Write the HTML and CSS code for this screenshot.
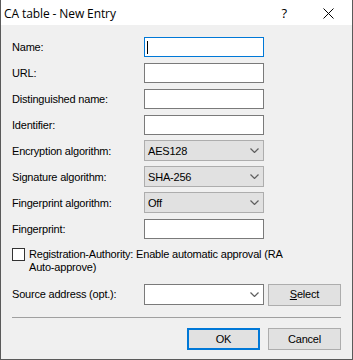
FILE: index.html
```html
<!DOCTYPE html>
<html>
<head>
<meta charset="utf-8">
<link rel="stylesheet" href="styles.css">
</head>
<body>
<div class="window">
  <div class="titlebar">
    <span class="title">CA table - New Entry</span>
    <span class="help">?</span>
    <svg class="close" width="11" height="11" viewBox="0 0 11 11"><path d="M0.5 0.5 L10.5 10.5 M10.5 0.5 L0.5 10.5" stroke="#000" stroke-width="1" fill="none"/></svg>
  </div>
  <div class="content">
    <div class="form">
      <label class="lbl">Name:</label>
      <div class="textbox focused"><span class="caret"></span></div>
      <label class="lbl">URL:</label>
      <div class="textbox"></div>
      <label class="lbl">Distinguished name:</label>
      <div class="textbox"></div>
      <label class="lbl">Identifier:</label>
      <div class="textbox"></div>
      <label class="lbl">Encryption algorithm:</label>
      <div class="combo"><span class="val">AES128</span><svg class="chev" width="9" height="5" viewBox="0 0 9 5"><polyline points="0.5,0.5 4.5,4.5 8.5,0.5" stroke="#5f5f5f" stroke-width="1.2" fill="none"/></svg></div>
      <label class="lbl">Signature algorithm:</label>
      <div class="combo"><span class="val">SHA-256</span><svg class="chev" width="9" height="5" viewBox="0 0 9 5"><polyline points="0.5,0.5 4.5,4.5 8.5,0.5" stroke="#5f5f5f" stroke-width="1.2" fill="none"/></svg></div>
      <label class="lbl">Fingerprint algorithm:</label>
      <div class="combo"><span class="val">Off</span><svg class="chev" width="9" height="5" viewBox="0 0 9 5"><polyline points="0.5,0.5 4.5,4.5 8.5,0.5" stroke="#5f5f5f" stroke-width="1.2" fill="none"/></svg></div>
      <label class="lbl">Fingerprint:</label>
      <div class="textbox"></div>
    </div>
    <div class="check-row">
      <span class="checkbox"></span>
      <span class="check-text">Registration-Authority: Enable automatic approval (RA<br>Auto-approve)</span>
    </div>
    <div class="source-row">
      <label class="lbl">Source address (opt.):</label>
      <div class="combo white"><span class="val"></span><svg class="chev" width="9" height="5" viewBox="0 0 9 5"><polyline points="0.5,0.5 4.5,4.5 8.5,0.5" stroke="#5f5f5f" stroke-width="1.2" fill="none"/></svg></div>
      <div class="btn select-btn"><span><u>S</u>elect</span></div>
    </div>
    <div class="sep"></div>
    <div class="buttons">
      <div class="btn default">OK</div>
      <div class="btn">Cancel</div>
    </div>
  </div>
</div>
</body>
</html>
```

FILE: styles.css
```css
* { box-sizing: border-box; }
html, body { margin: 0; padding: 0; background: #f0f0f0; }
body { font-family: "Liberation Sans", Arial, sans-serif; font-size: 11px; letter-spacing: -0.2px; color: #000; }

.window {
  width: 353px;
  height: 360px;
  background: #f0f0f0;
  border-left: 1px solid #5a5a5a;
  border-right: 1px solid #5a5a5a;
  border-bottom: 1px solid #5a5a5a;
  display: flex;
  flex-direction: column;
}

.titlebar {
  height: 25px;
  background: #fff;
  display: flex;
  align-items: center;
  padding-left: 3px;
}
.title {
  font-family: "Open Sans", "Noto Sans", sans-serif;
  font-size: 12px;
  color: #000;
  flex: 1;
  margin-top: 1px;
  letter-spacing: -0.1px;
}
.help {
  font-family: "Open Sans", "Noto Sans", sans-serif;
  font-size: 13px;
  letter-spacing: 0;
  margin-right: 36px;
  margin-top: 1px;
}
.close { margin-right: 18px; margin-top: 1px; display: block; }

.content {
  padding: 12px 11px 0 11px;
  display: flex;
  flex-direction: column;
}

.form {
  display: grid;
  grid-template-columns: 132px 120px;
  grid-auto-rows: 20px;
  row-gap: 6px;
  align-items: start;
}
.lbl { align-self: center; line-height: 13px; white-space: nowrap; }

.textbox {
  height: 20px;
  background: #fff;
  border: 1px solid #7a7a7a;
  display: flex;
  align-items: center;
  padding-left: 2px;
}
.textbox.focused { border-color: #0078d7; }
.caret { width: 1px; height: 13px; background: #000; }

.combo {
  height: 21px;
  margin-top: -1px;
  background: #e1e1e1;
  border: 1px solid #adadad;
  display: flex;
  align-items: center;
  padding: 0 4px 0 3px;
}
.combo .val { flex: 1; }
.combo .chev { display: block; }
.combo.white { background: #fff; border-color: #7a7a7a; margin-top: 0; width: 120px; }

.check-row {
  margin-top: 9px;
  display: flex;
  align-items: flex-start;
  gap: 4px;
  line-height: 13px;
}
.checkbox {
  width: 13px;
  height: 13px;
  border: 1px solid #333;
  background: #fff;
  flex: none;
}

.source-row {
  margin-top: 10px;
  display: flex;
  align-items: center;
  height: 21px;
}
.source-row .lbl { width: 132px; }
.select-btn { margin-left: 4px; width: 73px; height: 20px; }

.btn {
  height: 22px;
  width: 73px;
  background: #e1e1e1;
  border: 1px solid #adadad;
  display: flex;
  align-items: center;
  justify-content: center;
  line-height: 13px;
}
.btn.default { border: 2px solid #0078d7; }

.sep {
  margin-top: 12px;
  height: 1px;
  background: #a0a0a0;
}

.buttons {
  margin-top: 10px;
  display: flex;
  justify-content: flex-end;
  gap: 8px;
}
```
